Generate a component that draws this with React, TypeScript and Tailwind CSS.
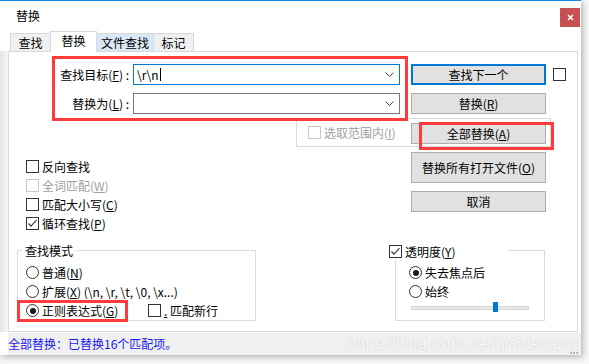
import React from "react";

function U({ children }: { children: React.ReactNode }) {
  return <span className="underline decoration-[1px] underline-offset-[1px]">{children}</span>;
}

function Check() {
  return (
    <svg width="11" height="11" viewBox="0 0 11 11">
      <polyline points="1.5,5.5 4,8.2 9.5,2.2" fill="none" stroke="#3a3a3a" strokeWidth="1.2" />
    </svg>
  );
}

function Box({ checked = false, disabled = false }: { checked?: boolean; disabled?: boolean }) {
  return (
    <span
      className={
        disabled
          ? "w-[13px] h-[13px] shrink-0 border border-[#c8c8c8] bg-white flex items-center justify-center"
          : "w-[13px] h-[13px] shrink-0 border border-[#333333] bg-white flex items-center justify-center"
      }
    >
      {checked && <Check />}
    </span>
  );
}

function Radio({ on = false }: { on?: boolean }) {
  return (
    <span className="w-[13px] h-[13px] shrink-0 rounded-full border border-[#333333] bg-white flex items-center justify-center">
      {on && <span className="w-[6px] h-[6px] rounded-full bg-[#1a1a1a]" />}
    </span>
  );
}

function Chevron() {
  return (
    <svg width="9" height="5" viewBox="0 0 9 5" className="mr-[5px] shrink-0">
      <polyline points="0.5,0.5 4.5,4.5 8.5,0.5" fill="none" stroke="#444" strokeWidth="1" />
    </svg>
  );
}

function Btn({ children, tall = false, primary = false }: { children: React.ReactNode; tall?: boolean; primary?: boolean }) {
  const base = "w-[135px] flex items-center justify-center bg-[#e1e1e1] leading-[16px]";
  const h = tall ? " h-[31px]" : " h-[21px]";
  const b = primary ? " border-2 border-[#0078d7]" : " border border-[#adadad]";
  return <div className={base + h + b}>{children}</div>;
}

function CheckRow({ label, checked = false, disabled = false }: { label: React.ReactNode; checked?: boolean; disabled?: boolean }) {
  return (
    <div className="flex items-center h-[13px]">
      <Box checked={checked} disabled={disabled} />
      <span className={disabled ? "ml-[3px] leading-[13px] text-[#a0a0a0]" : "ml-[3px] leading-[13px]"}>{label}</span>
    </div>
  );
}

function RadioRow({ label, on = false }: { label: React.ReactNode; on?: boolean }) {
  return (
    <div className="flex items-center h-[13px]">
      <Radio on={on} />
      <span className="ml-[3px] leading-[13px] whitespace-nowrap">{label}</span>
    </div>
  );
}

export default function App() {
  return (
    <div className="w-[589px] h-[364px] bg-[#f7f7f7] overflow-hidden font-['Noto_Sans_CJK_SC',sans-serif] text-[12px] text-black">
      <div className="w-[581px] h-[355px] bg-white border-t border-[#1883d7] shadow-[2px_2px_6px_rgba(0,0,0,0.28)] flex flex-col">
        {/* title bar */}
        <div className="h-[30px] flex items-start">
          <div className="pl-[16px] pt-[7px] leading-[16px]">替换</div>
          <div className="ml-auto mr-[1px] mt-[7px] w-[20px] h-[19px] bg-[#c75050] flex items-center justify-center">
            <svg width="7" height="7" viewBox="0 0 7 7">
              <path d="M1 1 L6 6 M6 1 L1 6" stroke="white" strokeWidth="1.6" />
            </svg>
          </div>
        </div>
        {/* tabs */}
        <div className="h-[20px] pl-[10px] flex items-end">
          <div className="w-[41px] h-[18px] bg-[#f0f0f0] border-t border-l border-r border-[#d9d9d9] flex items-center justify-center leading-[16px]">查找</div>
          <div className="relative z-10 ml-[-1px] mb-[-1px] w-[47px] h-[21px] bg-white border-t border-l border-r border-[#d9d9d9] flex justify-center pt-[1px] leading-[16px]">替换</div>
          <div className="ml-[-1px] w-[58px] h-[18px] bg-[#d9e8f6] border-t border-l border-r border-[#d9d9d9] flex items-center justify-center leading-[16px]">文件查找</div>
          <div className="ml-[-1px] w-[41px] h-[18px] bg-[#f0f0f0] border-t border-l border-r border-[#d9d9d9] flex items-center justify-center leading-[16px]">标记</div>
        </div>
        {/* panel row */}
        <div className="flex">
          <div className="w-[8px] h-[281px] bg-gradient-to-r from-[#e4e4e4] to-[#f7f7f7]" />
          <div className="relative z-0 w-[570px] h-[281px] border border-[#d9d9d9] bg-white">
            {/* selection range group (behind) */}
            <div className="absolute -z-10 left-[287px] top-[66px] w-[255px] h-[29px] border border-[#dcdcdc]">
              <div className="ml-[11px] mt-[7px] flex items-center h-[13px]">
                <Box disabled />
                <span className="ml-[3px] leading-[13px] text-[#a0a0a0]">
                  选取范围内(<U>I</U>)
                </span>
              </div>
            </div>
            {/* red box around replace all */}
            <div className="absolute z-10 left-[410px] top-[70px] w-[135px] h-[28px] border-[3px] border-[#ff3b3b]" />

            {/* top section */}
            <div className="flex">
              <div className="w-[402px] flex flex-col">
                <div className="ml-[43px] mt-[4px] w-[356px] h-[65px] border-[3px] border-[#ff3b3b] pt-[5px] flex flex-col gap-[8px]">
                  <div className="flex items-center h-[21px]">
                    <div className="w-[78px] pr-[4px] text-right leading-[16px] whitespace-nowrap">
                      查找目标(<U>F</U>) :
                    </div>
                    <div className="w-[267px] h-[21px] bg-white border border-[#0078d7] flex items-center">
                      <div className="flex-1 pl-[3px] flex items-center leading-[16px]">
                        <span>\r\n</span>
                        <span className="ml-[1px] w-[1px] h-[13px] bg-black" />
                      </div>
                      <Chevron />
                    </div>
                  </div>
                  <div className="flex items-center h-[21px]">
                    <div className="w-[78px] pr-[4px] text-right leading-[16px] whitespace-nowrap">
                      替换为(<U>L</U>) :
                    </div>
                    <div className="w-[267px] h-[21px] bg-white border border-[#7a7a7a] flex items-center">
                      <div className="flex-1" />
                      <Chevron />
                    </div>
                  </div>
                </div>
                <div className="ml-[17px] mt-[39px] flex flex-col gap-[6px]">
                  <CheckRow label="反向查找" />
                  <CheckRow label={<>全词匹配(<U>W</U>)</>} disabled />
                  <CheckRow label={<>匹配大小写(<U>C</U>)</>} />
                  <CheckRow label={<>循环查找(<U>P</U>)</>} checked />
                </div>
              </div>
              <div className="flex flex-col mt-[12px]">
                <div className="flex items-start">
                  <Btn primary>查找下一个</Btn>
                  <div className="ml-[7px] mt-[4px]">
                    <Box />
                  </div>
                </div>
                <div className="mt-[8px]">
                  <Btn>替换(<U>R</U>)</Btn>
                </div>
                <div className="mt-[9px]">
                  <Btn>全部替换(<U>A</U>)</Btn>
                </div>
                <div className="mt-[8px]">
                  <Btn tall>替换所有打开文件(<U>O</U>)</Btn>
                </div>
                <div className="mt-[8px]">
                  <Btn>取消</Btn>
                </div>
              </div>
            </div>

            {/* bottom section */}
            <div className="flex items-start mt-[20px]">
              <div className="relative ml-[8px] w-[239px] h-[71px] border border-[#dcdcdc]">
                <div className="absolute left-[4px] top-[-8px] px-[3px] bg-white leading-[16px]">查找模式</div>
                <div className="pl-[8px] pt-[15px] flex flex-col gap-[6px]">
                  <RadioRow label={<>普通(<U>N</U>)</>} />
                  <RadioRow label={<>扩展(<U>X</U>) (\n, \r, \t, \0, \x...)</>} />
                  <div className="flex items-center h-[13px]">
                    <div className="w-[122px] flex items-center">
                      <Radio on />
                      <span className="ml-[3px] leading-[13px] whitespace-nowrap">
                        正则表达式(<U>G</U>)
                      </span>
                    </div>
                    <Box />
                    <span className="ml-[3px] leading-[13px] whitespace-nowrap">
                      <U>.</U> 匹配新行
                    </span>
                  </div>
                </div>
                <div className="absolute z-10 left-[-1px] top-[49px] w-[111px] h-[22px] border-[3px] border-[#ff3b3b]" />
              </div>

              <div className="relative ml-[139px] w-[150px] h-[71px] border border-[#dcdcdc]">
                <div className="absolute left-[-7px] top-[-7px] w-[119px] h-[15px] bg-white flex items-center">
                  <Box checked />
                  <span className="ml-[3px] leading-[13px]">
                    透明度(<U>Y</U>)
                  </span>
                </div>
                <div className="pl-[13px] pt-[15px] flex flex-col gap-[6px]">
                  <RadioRow label="失去焦点后" on />
                  <RadioRow label="始终" />
                </div>
                <div className="relative ml-[15px] mt-[8px] w-[118px] h-[4px] bg-[#e7eaea] border border-[#d6d6d6]">
                  <div className="absolute left-[81px] top-[-5px] w-[5px] h-[10px] bg-[#0078d7]" />
                </div>
              </div>
            </div>
          </div>
        </div>
        {/* status bar */}
        <div className="relative overflow-hidden ml-[8px] mt-[1px] h-[22px] bg-[#f0f0f0] flex items-center">
          <span className="leading-[16px] text-[#1a1af0]">全部替换：已替换16个匹配项。</span>
          <span className="absolute left-[340px] top-[3px] whitespace-nowrap font-['Liberation_Sans',sans-serif] text-[16px] leading-[16px] text-[#f9f9f9] [text-shadow:0_0_1.5px_#c4c4c4]">
            https://blog.csdn.net/qiaofengzxg
          </span>
          <div className="absolute right-[3px] bottom-[1px] flex gap-[1px]">
            <span className="w-[2px] h-[2px] bg-[#b8b8b8]" />
            <span className="w-[2px] h-[2px] bg-[#b8b8b8]" />
            <span className="w-[2px] h-[2px] bg-[#b8b8b8]" />
          </div>
        </div>
      </div>
    </div>
  );
}
